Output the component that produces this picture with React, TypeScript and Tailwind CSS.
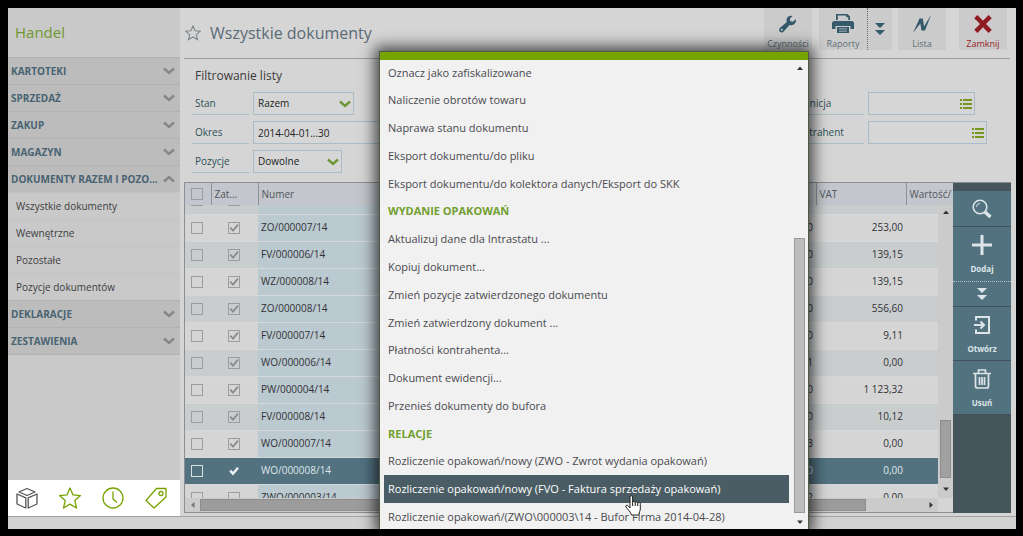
import { useState, type ReactNode } from "react";
import clsx from "clsx";

const SECTIONS_TOP = ["KARTOTEKI", "SPRZEDAŻ", "ZAKUP", "MAGAZYN"];
const SECTION_OPEN = "DOKUMENTY RAZEM I POZO...";
const OPEN_LINKS = ["Wszystkie dokumenty", "Wewnętrzne", "Pozostałe", "Pozycje dokumentów"];
const SECTIONS_BOTTOM = ["DEKLARACJE", "ZESTAWIENIA"];

interface Doc {
  number: string;
  net: string;
  vat: string;
  approved: boolean;
}

const DOCS: Doc[] = [
  { number: "PZ/000003/14", net: "550,00", vat: "126,50", approved: false },
  { number: "ZO/000007/14", net: "1 100,00", vat: "253,00", approved: true },
  { number: "FV/000006/14", net: "605,00", vat: "139,15", approved: true },
  { number: "WZ/000008/14", net: "605,00", vat: "139,15", approved: true },
  { number: "ZO/000008/14", net: "2 420,00", vat: "556,60", approved: true },
  { number: "FV/000007/14", net: "39,60", vat: "9,11", approved: true },
  { number: "WO/000006/14", net: "0,01", vat: "0,00", approved: true },
  { number: "PW/000004/14", net: "4 884,00", vat: "1 123,32", approved: true },
  { number: "FV/000008/14", net: "44,00", vat: "10,12", approved: true },
  { number: "WO/000007/14", net: "0,03", vat: "0,00", approved: true },
  { number: "WO/000008/14", net: "0,00", vat: "0,00", approved: true },
  { number: "ZWO/000003/14", net: "0,02", vat: "0,00", approved: false },
];

const SELECTED = "WO/000008/14";

const MENU: { label: string; heading?: boolean }[] = [
  { label: "Oznacz jako zafiskalizowane" },
  { label: "Naliczenie obrotów towaru" },
  { label: "Naprawa stanu dokumentu" },
  { label: "Eksport dokumentu/do pliku" },
  { label: "Eksport dokumentu/do kolektora danych/Eksport do SKK" },
  { label: "WYDANIE OPAKOWAŃ", heading: true },
  { label: "Aktualizuj dane dla Intrastatu ..." },
  { label: "Kopiuj dokument..." },
  { label: "Zmień pozycje zatwierdzonego dokumentu" },
  { label: "Zmień zatwierdzony dokument ..." },
  { label: "Płatności kontrahenta..." },
  { label: "Dokument ewidencji..." },
  { label: "Przenieś dokumenty do bufora" },
  { label: "RELACJE", heading: true },
  { label: "Rozliczenie opakowań/nowy (ZWO - Zwrot wydania opakowań)" },
  { label: "Rozliczenie opakowań/nowy (FVO - Faktura sprzedaży opakowań)" },
  { label: "Rozliczenie opakowań/(ZWO\\000003\\14 - Bufor Firma 2014-04-28)" },
];

const ACTIVE_ITEM = 15;

function Chevron({ up, className }: { up?: boolean; className?: string }) {
  return (
    <svg viewBox="0 0 12 8" className={clsx("h-2 w-3", className)} fill="none" stroke="currentColor" strokeWidth="2.4">
      <path d={up ? "M1 6.5 6 2l5 4.5" : "M1 1.5 6 6l5-4.5"} />
    </svg>
  );
}

function DoubleArrow() {
  return (
    <svg viewBox="0 0 10 12" className="h-3 w-2.5" fill="currentColor">
      <path d="M0 0h10L5 5zM0 7h10l-5 5z" />
    </svg>
  );
}

function Arrow({ dir, className }: { dir: "up" | "down" | "left" | "right"; className?: string }) {
  const d = {
    up: "M0 5 3 1.5 6 5z",
    down: "M0 1.5h6L3 5z",
    left: "M4.5 0v6L1 3z",
    right: "M1.5 0v6L5 3z",
  }[dir];
  return (
    <svg viewBox="0 0 6 6" className={clsx("size-1.5", className)} fill="currentColor">
      <path d={d} />
    </svg>
  );
}

function Section({ label, open }: { label: string; open?: boolean }) {
  return (
    <button
      type="button"
      aria-expanded={!!open}
      className="flex h-[27px] w-full items-center justify-between border-t border-[#b0b2b3] bg-[#bcbcbc] pr-[5px] pl-[3px] text-[10px] font-bold text-[#486371]"
    >
      {label}
      <Chevron up={open} className="text-[#868686]" />
    </button>
  );
}

function Sidebar() {
  return (
    <aside className="flex w-[172px] shrink-0 flex-col bg-[#c9c9c9]">
      <h1 className="flex h-[49px] items-center pl-[7px] text-[15px] text-[#709830]">Handel</h1>
      <nav className="flex-1">
        {SECTIONS_TOP.map((s) => (
          <Section key={s} label={s} />
        ))}
        <Section label={SECTION_OPEN} open />
        {OPEN_LINKS.map((l) => (
          <a key={l} href="#" className="flex h-[27px] items-center border-t border-[#c3c3c3] pl-2 text-[10px] text-[#3e3e40]">
            {l}
          </a>
        ))}
        {SECTIONS_BOTTOM.map((s) => (
          <Section key={s} label={s} />
        ))}
        <div className="border-t border-[#b4b4b4]" />
      </nav>
      <div className="flex h-9 items-center bg-white pl-2">
        <SideIcon label="Moduły" className="text-[#555]">
          <path d="M3 5l8-3.500L19 5l-8 3.500zM1 7l8.800 3.800V21L1 17zM21 7l-8.800 3.800V21L21 17z" />
        </SideIcon>
        <SideIcon label="Ulubione" className="text-[#76a300]">
          <path d="m11 1 3 6.900 7.500.7-5.700 5 1.700 7.400L11 17.100 4.500 21l1.700-7.400L.5 8.600 8 7.900z" />
        </SideIcon>
        <SideIcon label="Ostatnie" className="text-[#76a300]">
          <circle cx="11" cy="11" r="10" />
          <path d="M11 4.500V12l4 3.500" />
        </SideIcon>
        <SideIcon label="Etykiety" className="text-[#76a300]">
          <path d="M11.500 1.500h9.500V10L9 21 1 13.500z" />
          <circle cx="16" cy="6.500" r="2" />
        </SideIcon>
      </div>
    </aside>
  );
}

function SideIcon({ label, className, children }: { label: string; className: string; children: ReactNode }) {
  return (
    <button type="button" aria-label={label} className={clsx("w-[43px] shrink-0", className)}>
      <svg viewBox="0 0 22 22" className="size-[22px]" fill="none" stroke="currentColor" strokeWidth="1.3" strokeLinejoin="round">
        {children}
      </svg>
    </button>
  );
}

function TopButton({ label, danger, children }: { label: string; danger?: boolean; children: ReactNode }) {
  return (
    <button
      type="button"
      className={clsx(
        "flex h-[42px] w-12 flex-col items-center bg-[#cbcbcb] pt-1 text-[9px] leading-3",
        danger ? "text-[#961f2b]" : "text-[#5c6d77]",
      )}
    >
      <span className={clsx("flex h-[23px] items-center", danger ? "text-[#8e1a22]" : "text-[#34596b]")}>{children}</span>
      <span className="pt-[3px]">{label}</span>
    </button>
  );
}

function Header() {
  return (
    <header className="mr-1.5 ml-1 flex h-[51px] items-start border-b border-[#989c9f] pl-px">
      <svg viewBox="0 0 16 16" className="mt-[17px] size-4 text-[#7f868b]" fill="none" stroke="currentColor" strokeWidth="1.1">
        <path d="m8 1 2.100 4.700 5.100.5-3.800 3.400 1.100 5L8 12l-4.500 2.600 1.100-5L.8 6.200l5.100-.5z" />
      </svg>
      <h2 className="ml-[9px] flex h-[50px] items-center text-base text-[#5b6b77]">Wszystkie dokumenty</h2>
      <div className="mr-[3px] ml-auto flex">
        <TopButton label="Czynności">
          <svg viewBox="0 0 20 20" className="size-[18px]" fill="currentColor">
            <path
              fillRule="evenodd"
              d="M18.600 4.600 15.300 7.600 12.600 6.900 12 4.200l3-3.200C12.200 0 8.600 1.900 8.300 5.300c-.1.900.1 1.700.4 2.400L1.300 14.200c-1.500 1.400-1.400 3.300-.3 4.400 1.200 1.200 3.100 1.200 4.300-.3l6.400-7.300c.8.300 1.500.4 2.300.3 3.600-.2 5.600-3.800 4.600-6.700zM3.200 17.500a1.100 1.100 0 1 1 0-2.200 1.100 1.100 0 0 1 0 2.200z"
            />
          </svg>
        </TopButton>
        <span className="w-[7px]" />
        <TopButton label="Raporty">
          <svg viewBox="0 0 22 19" className="h-[19px] w-[22px]" fill="currentColor">
            <path fillRule="evenodd" d="M4 0h11.500L18 2.500V6H4zm1.800 1.500V6h10.400V3.300h-2V1.500zM2.500 7h17C21 7 22 8 22 9.300V15h-3.500v-3h-15v3H0V9.300C0 8 1 7 2.500 7zM5 13h12v6H5zm2 1.500v.8h8v-.8zM7 16.700v.8h8v-.8z" />
          </svg>
        </TopButton>
        <button
          type="button"
          aria-label="Więcej raportów"
          className="flex h-[42px] w-[25px] items-center justify-center border-l border-dotted border-[#5f727d] bg-[#cbcbcb] text-[#34596b]"
        >
          <DoubleArrow />
        </button>
        <span className="w-1.5" />
        <TopButton label="Lista">
          <svg viewBox="0 0 18 18" className="size-[18px]" fill="currentColor">
            <path d="M0 18 6.500 3.500H9.800L11 11.500 18 0 12 15.500H8.500L7.300 8.500z" />
          </svg>
        </TopButton>
        <span className="w-[13px]" />
        <TopButton label="Zamknij" danger>
          <svg viewBox="0 0 18 18" className="size-[18px]" fill="none" stroke="currentColor" strokeWidth="4.5">
            <path d="M1.800 1.600c4 3.800 10 10.500 14.400 14.800M16.200 1.600C12 5.500 6 12.500 1.800 16.400" />
          </svg>
        </TopButton>
      </div>
    </header>
  );
}

const LABEL = "flex h-[23px] items-center border-b border-[#a9c0c6] text-[10px] text-[#2f5058]";
const FIELD = "h-[23px] border border-[#a9bcc8] bg-[#d6d6d6] text-[10px] text-[#222]";

function SelectField({ id, label, value, width }: { id: string; label: string; value: string; width: string }) {
  return (
    <div className="flex h-[29px] items-start">
      <label htmlFor={id} className={clsx(LABEL, "mr-1 w-[57px] pl-[3px]")}>
        {label}
      </label>
      <div className={clsx("relative", width)}>
        <select id={id} className={clsx(FIELD, "block w-full appearance-none pl-1")}>
          <option>{value}</option>
        </select>
        <Chevron className="pointer-events-none absolute top-2 right-[3px] text-[#6c9736]" />
      </div>
    </div>
  );
}

function PickField({ id, label, width }: { id: string; label: string; width: string }) {
  return (
    <div className="flex h-[29px] items-start">
      <label htmlFor={id} className={clsx(LABEL, "mr-1 w-[73px]")}>
        {label}
      </label>
      <div className={clsx("relative", width)}>
        <input id={id} type="text" className={clsx(FIELD, "block w-full pr-5 pl-1")} />
        <svg viewBox="0 0 12 10" className="pointer-events-none absolute top-[7px] right-[3px] h-2.5 w-3 text-[#76971d]" fill="currentColor">
          <path d="M0 0h2v2H0zM3 0h9v2H3zM0 4h2v2H0zM3 4h9v2H3zM0 8h2v2H0zM3 8h9v2H3z" />
        </svg>
      </div>
    </div>
  );
}

function Filters() {
  return (
    <section className="ml-3 h-[123px]">
      <h3 className="flex h-[33px] items-center pl-[3px] text-xs text-[#3a3a3a]">Filtrowanie listy</h3>
      <div className="flex justify-between pr-[29px]">
        <div>
          <SelectField id="stan" label="Stan" value="Razem" width="w-[101px]" />
          <div className="flex h-[29px] items-start">
            <label htmlFor="okres" className={clsx(LABEL, "mr-1 w-[57px] pl-[3px]")}>
              Okres
            </label>
            <input id="okres" type="text" defaultValue="2014-04-01...30" className={clsx(FIELD, "w-40 pl-1")} />
          </div>
          <SelectField id="pozycje" label="Pozycje" value="Dowolne" width="w-[89px]" />
        </div>
        <div>
          <PickField id="definicja" label="Definicja" width="w-[107px]" />
          <PickField id="kontrahent" label="Kontrahent" width="w-[119px]" />
        </div>
      </div>
    </section>
  );
}

function Box({ label, checked, light }: { label: string; checked?: boolean; light?: boolean }) {
  const [on, setOn] = useState(!!checked);
  const bare = light && on;
  return (
    <span className="relative mx-auto block size-3">
      <input
        type="checkbox"
        aria-label={label}
        checked={on}
        onChange={(e) => setOn(e.target.checked)}
        className={clsx("block size-3 appearance-none", !bare && "border", light ? "border-[#d9e0e3]" : "border-[#9b9d9e]")}
      />
      {on && (
        <svg
          viewBox="0 0 12 12"
          className={clsx("pointer-events-none absolute inset-0 size-3", light ? "text-[#eef2f3]" : "text-[#8a8c8d]")}
          fill="none"
          stroke="currentColor"
          strokeWidth={light ? 2.5 : 1.8}
        >
          <path d="m2.200 5.700 2.800 3 5-6" />
        </svg>
      )}
    </span>
  );
}

function Columns({ last }: { last: string }) {
  return (
    <colgroup>
      <col className="w-[26px]" />
      <col className="w-[47px]" />
      <col />
      <col className="w-[120px]" />
      <col className="w-[90px]" />
      <col className={last} />
    </colgroup>
  );
}

function Grid() {
  return (
    <div className="flex min-w-0 flex-1 flex-col border-t border-b border-l border-[#8b8f92]">
      <table className="w-full table-fixed text-[10px] text-[#4f565e]">
        <Columns last="w-[47px]" />
        <thead>
          <tr className="h-[22px] bg-[#c3c6cc] text-left">
            <th className="border-r border-[#8e9296] p-0 pr-px">
              <Box label="Zaznacz wszystkie" />
            </th>
            <th className="border-r border-[#8e9296] p-0 pl-[3px] font-normal">Zat...</th>
            <th className="p-0 pl-[3px] font-normal">Numer</th>
            <th className="border-r border-[#8e9296] p-0 pr-4 text-right font-normal">Netto</th>
            <th className="border-r border-[#8e9296] p-0 pl-[3px] font-normal">VAT</th>
            <th className="p-0 pl-[3px] font-normal whitespace-nowrap">Wartość/</th>
          </tr>
        </thead>
      </table>
      <div className="flex min-h-0 flex-1">
        <div className="min-w-0 flex-1 overflow-hidden">
          <table className="-mt-[18px] w-full table-fixed text-[10px] text-[#323236]">
            <Columns last="w-8" />
            <tbody>
              {DOCS.map((d, i) => {
                const sel = d.number === SELECTED;
                return (
                  <tr
                    key={d.number}
                    className={clsx(
                      "h-[27px] border-b border-[#d6d8d9]",
                      sel ? "bg-[#527280] text-[#dfe6e9]" : i % 2 === 0 ? "bg-[#c9cdce]" : "bg-[#d5d5d5]",
                    )}
                  >
                    <td className="p-0 pr-0.5">
                      <Box label={"Zaznacz " + d.number} light={sel} />
                    </td>
                    <td className="p-0 pr-0.5">
                      <Box label={"Zatwierdzony " + d.number} checked={d.approved} light={sel} />
                    </td>
                    <td className={clsx("p-0 pl-[3px]", !sel && "bg-[#bbc9d0]")}>{d.number}</td>
                    <td className="p-0 pr-[3px] text-right">{d.net}</td>
                    <td className="p-0 pr-[3px] text-right">{d.vat}</td>
                    <td className="p-0" />
                  </tr>
                );
              })}
            </tbody>
          </table>
        </div>
        <div className="flex w-[15px] flex-col items-center bg-[#cbcbcb] pt-1 pb-1.5">
          <Arrow dir="up" className="text-[#333]" />
          <div className="mt-auto mb-2 h-[58px] w-[11px] border border-[#8d8d8d] bg-[#a0a0a0]" />
          <Arrow dir="down" className="text-[#333]" />
        </div>
      </div>
      <div className="mr-[15px] flex h-[14px] items-center bg-[#cbcbcb] pr-1 pl-[5px]">
        <Arrow dir="left" className="text-[#777]" />
        <div className="ml-1 h-3 flex-1 border border-[#8d8d8d] bg-[#9c9c9c]" />
        <Arrow dir="right" className="ml-[62px] text-[#333]" />
      </div>
    </div>
  );
}

function ToolButton({ label, text, className, children }: { label: string; text?: boolean; className: string; children: ReactNode }) {
  return (
    <button
      type="button"
      aria-label={label}
      className={clsx("flex w-full flex-col items-center justify-center border-b bg-[#527280] text-[#dde5e8]", className)}
    >
      {children}
      {text && <span className="mt-2 text-[8px] leading-3 font-bold">{label}</span>}
    </button>
  );
}

function Toolbar() {
  return (
    <div className="w-[58px] shrink-0 border-t border-[#8b8f92] bg-[#46555b] pt-2">
      <ToolButton label="Szukaj" className="h-9 border-[#41525a]">
        <svg viewBox="0 0 20 20" className="size-5" fill="none" stroke="currentColor" strokeWidth="1.6">
          <circle cx="8" cy="8" r="6.8" />
          <path d="M4.500 8A3.500 3.500 0 0 1 8 4.500" strokeWidth="1" />
          <path d="m13 13 5.500 5" strokeWidth="3.5" />
        </svg>
      </ToolButton>
      <ToolButton label="Dodaj" text className="h-[55px] border-dotted border-[#b9c6cb] pt-0.5">
        <svg viewBox="0 0 20 20" className="size-5" stroke="currentColor" strokeWidth="3">
          <path d="M10 0v20M0 10h20" />
        </svg>
      </ToolButton>
      <ToolButton label="Więcej" className="h-[25px] border-[#41525a]">
        <DoubleArrow />
      </ToolButton>
      <ToolButton label="Otwórz" text className="h-[54px] border-[#41525a] pt-0.5">
        <svg viewBox="0 0 18 20" className="h-5 w-[18px]" fill="none" stroke="currentColor" strokeWidth="2">
          <path d="M3 5.500V2h13v16H3v-3.500M1 10h10M7.500 6.500 11 10l-3.500 3.500" />
        </svg>
      </ToolButton>
      <ToolButton label="Usuń" text className="h-[54px] border-[#41525a] pt-0.5">
        <svg viewBox="0 0 18 20" className="h-5 w-[18px]" fill="none" stroke="currentColor" strokeWidth="1.7">
          <path d="M0 4.500h18M5.500 4.500V1h7v3.500M2.500 4.500V17q0 2 2 2h9q2 0 2-2V4.500M6.500 8v8M9 8v8M11.500 8v8" />
        </svg>
      </ToolButton>
    </div>
  );
}

function ActionsMenu() {
  return (
    <div className="absolute top-[43px] -bottom-0.5 left-[371px] flex w-[430px] flex-col border-x border-t border-[#4d5a44] bg-[#f1f1f1] shadow-[0_0_14px_4px_rgba(0,0,0,0.7)]">
      <div className="h-2 shrink-0 bg-[#76a400]" />
      <div className="-mt-px flex min-h-0 flex-1">
        <ul role="menu" className="flex flex-1 flex-col pr-1 pl-1 text-[11px] text-[#4a4a4f]">
          {MENU.map((m, i) =>
            m.heading ? (
              <li key={m.label} className="flex flex-1 items-center pl-1 font-bold text-[#719f30]">
                {m.label}
              </li>
            ) : (
              <li key={m.label} role="none" className="flex flex-1">
                <button
                  type="button"
                  role="menuitem"
                  className={clsx("relative flex flex-1 items-center pl-1 text-left", i === ACTIVE_ITEM && "bg-[#4a5d64] text-white")}
                >
                  {m.label}
                  {i === ACTIVE_ITEM && <HandCursor />}
                </button>
              </li>
            ),
          )}
        </ul>
        <div className="flex w-[15px] flex-col items-center pt-1.5 pr-0.5 pb-1.5">
          <Arrow dir="up" className="text-[#333]" />
          <div className="mt-auto mb-1.5 h-[275px] w-[11px] border border-[#9b9b9b] bg-[#bdbdbd]" />
          <Arrow dir="down" className="text-[#333]" />
        </div>
      </div>
    </div>
  );
}

function HandCursor() {
  return (
    <svg viewBox="0 0 16 21" className="pointer-events-none absolute top-5 left-[241px] z-10 h-[21px] w-4" fill="#fff" stroke="#222" strokeWidth="1" strokeLinejoin="round">
      <path d="M5 13V2a1.300 1.300 0 0 1 2.600 0v5.500a1.300 1.300 0 0 1 2.600.3 1.300 1.300 0 0 1 2.500.6 1.300 1.300 0 0 1 2.600.8V14c0 2-1.300 3-1.300 6H6.500C6 17 2.500 14.500 1 12c-.6-1.600 1-2.400 2-1.400z" />
      <path d="M7.600 7.500V11M10.200 8v3M12.700 8.500V11" fill="none" />
    </svg>
  );
}

export default function App() {
  return (
    <div className="h-screen bg-black pt-2 pr-[7px] pb-[7px] pl-2 font-['Open_Sans',sans-serif]">
      <div className="relative flex h-full flex-col overflow-hidden bg-[#d5d5d5]">
        <div className="flex min-h-0 flex-1">
          <Sidebar />
          <main className="flex min-w-0 flex-1 flex-col">
            <Header />
            <Filters />
            <div className="mr-[5px] mb-[3px] ml-1 flex min-h-0 flex-1">
              <Grid />
              <Toolbar />
            </div>
          </main>
        </div>
        <footer className="h-[13px] shrink-0 border-t border-[#a3a3a3] bg-[#d2d2d2]" />
        <ActionsMenu />
      </div>
    </div>
  );
}
